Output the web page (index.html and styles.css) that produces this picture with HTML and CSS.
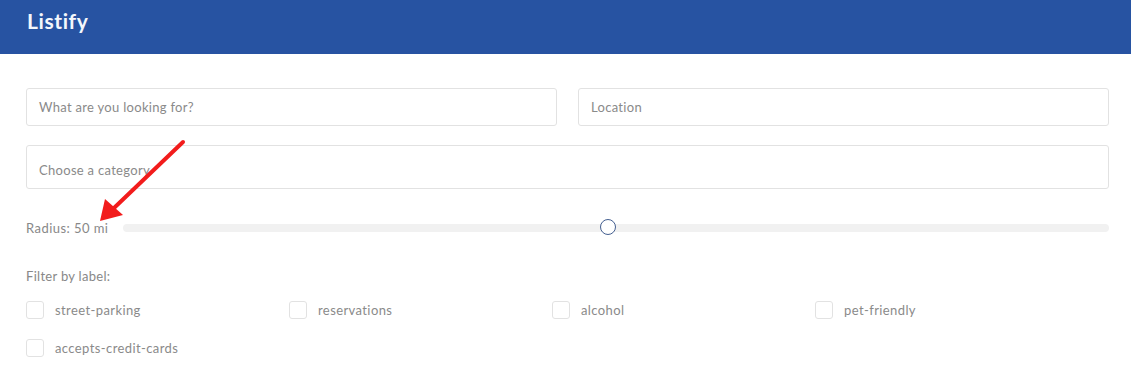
FILE: index.html
```html
<!DOCTYPE html>
<html lang="en">
<head>
    <meta charset="UTF-8">
    <meta name="viewport" content="width=device-width, initial-scale=1.0">
    <title>Listify</title>
    <link rel="stylesheet" href="styles.css">
</head>
<body>
    <header class="topbar">
        <h1 class="brand">Listify</h1>
    </header>

    <main class="search">
        <div class="row-two">
            <div class="field">What are you looking for?</div>
            <div class="field">Location</div>
        </div>

        <div class="field field-tall">Choose a category</div>

        <div class="radius">
            <span class="radius-label">Radius: 50 mi</span>
            <div class="track">
                <span class="thumb"></span>
            </div>
        </div>

        <p class="filter-title">Filter by label:</p>

        <div class="labels">
            <label class="check"><span class="box"></span>street-parking</label>
            <label class="check"><span class="box"></span>reservations</label>
            <label class="check"><span class="box"></span>alcohol</label>
            <label class="check"><span class="box"></span>pet-friendly</label>
            <label class="check"><span class="box"></span>accepts-credit-cards</label>
        </div>
    </main>

    <!-- annotation arrow -->
    <svg class="annot" width="200" height="240" viewBox="0 0 200 240">
        <line x1="183" y1="142" x2="114" y2="208" stroke="#f21c1c" stroke-width="4" stroke-linecap="round"/>
        <polygon points="100,221 105,199 123,215" fill="#f21c1c"/>
    </svg>
</body>
</html>
```

FILE: styles.css
```css
/* Listify search form */
:root {
  --brand-rgb: 39, 83, 162;
  --text-rgb: 136, 136, 136;
  --border-rgb: 226, 226, 226;
}

body {
    margin: 0;
    font-family: Lato, "Open Sans", sans-serif;
    color: rgba(var(--text-rgb), 1);
    background: #fff;
    letter-spacing: 0.3px;
}

.topbar {
    height: 54px;
    background-color: rgba(var(--brand-rgb), 1);
    display: flex;
    align-items: center;
    padding: 0 27px;
    box-sizing: border-box;
}

.brand {
    margin: 0 0 14px;
    font-size: 21px;
    font-weight: 700;
    color: #f4f7fc;
    letter-spacing: 0.6px;
}

.search {
    padding: 34px 22px 0 26px;
}

.row-two {
    display: grid;
    grid-template-columns: 1fr 1fr;
    gap: 21px;
    margin-bottom: 19px;
}

.field {
    height: 38px;
    box-sizing: border-box;
    border: 1px solid rgba(var(--border-rgb), 1);
    border-radius: 3px;
    padding: 0 12px;
    display: flex;
    align-items: center;
    font-size: 13px;
    color: #8a8a8a;
}

.field-tall {
    height: 44px;
    padding-top: 5px;
}

.radius {
    display: flex;
    align-items: center;
    margin-top: 31px;
    height: 16px;
}

.radius-label {
    font-size: 13px;
    letter-spacing: 0.45px;
    width: 97px;
    flex: none;
}

.track {
    flex: 1;
    height: 8px;
    border-radius: 4px;
    background: #f1f1f1;
    position: relative;
}

.thumb {
    position: absolute;
    left: 477px;
    top: -5px;
    width: 16px;
    height: 16px;
    box-sizing: border-box;
    border: 1.5px solid #445f90;
    border-radius: 50%;
    background: #fff;
}

.filter-title {
    font-size: 13px;
    margin: 33px 0 0;
    line-height: 14px;
}

.labels {
    display: grid;
    grid-template-columns: repeat(4, 263px);
    row-gap: 20px;
    margin-top: 18px;
}

.check {
    display: flex;
    align-items: center;
    gap: 11px;
    font-size: 13px;
    letter-spacing: 0.4px;
    color: #8a8a8a;
}

.box {
    width: 18px;
    height: 18px;
    box-sizing: border-box;
    border: 1px solid rgba(var(--border-rgb), 1);
    border-radius: 3px;
}

.annot {
    position: absolute;
    left: 0;
    top: 0;
    pointer-events: none;
}
```
